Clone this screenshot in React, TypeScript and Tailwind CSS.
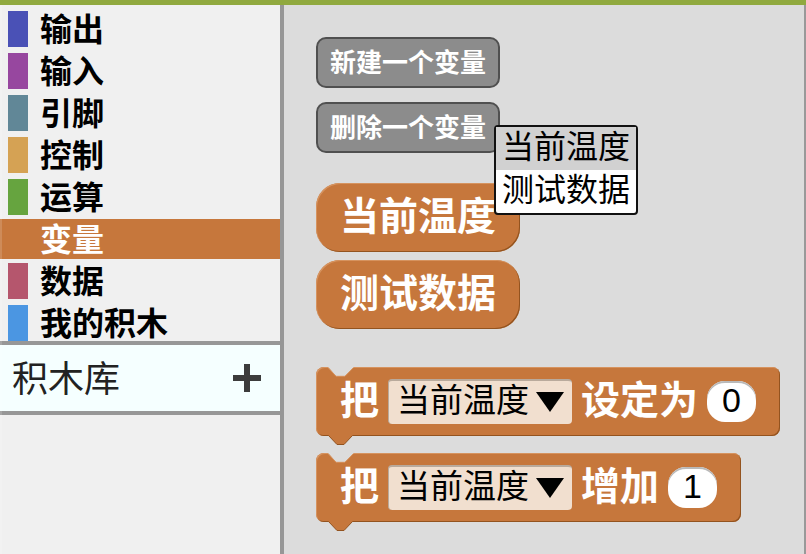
import { useState } from "react";
import type { ReactNode } from "react";

const categories = [
  { name: "输出", color: "bg-[#4a51b6]" },
  { name: "输入", color: "bg-[#97479f]" },
  { name: "引脚", color: "bg-[#618797]" },
  { name: "控制", color: "bg-[#d5a254]" },
  { name: "运算", color: "bg-[#66a43f]" },
  { name: "变量", color: "bg-[#c6773c]" },
  { name: "数据", color: "bg-[#b5566d]" },
  { name: "我的积木", color: "bg-[#4b96e2]" },
];

const variables = ["当前温度", "测试数据"];

const blockEdge =
  "shadow-[inset_1px_1px_0_#d6935f,inset_-1px_-1px_0_#93531f]";

function GreyButton({ children }: { children: ReactNode }) {
  return (
    <button
      type="button"
      className="flex h-[51px] items-center rounded-[10px] border-2 border-[#505050] bg-[#8c8c8c] px-3 pb-1 text-[26px] leading-[38px] font-bold whitespace-nowrap text-white"
    >
      {children}
    </button>
  );
}

function VariableBlock({ name }: { name: string }) {
  return (
    <button
      type="button"
      className={`flex h-[69px] items-center rounded-3xl bg-[#c6773c] px-6 pb-2.5 text-[39px] leading-[50px] font-bold whitespace-nowrap text-white ${blockEdge}`}
    >
      {name}
    </button>
  );
}

function StatementBlock({
  action,
  id,
  initial,
}: {
  action: string;
  id: string;
  initial: string;
}) {
  const [value, setValue] = useState(initial);
  return (
    <div
      className={`relative flex h-[69px] items-center gap-[9px] rounded-[8px] bg-[#c6773c] px-6 text-[39px] leading-[50px] font-bold whitespace-nowrap text-white ${blockEdge}`}
    >
      <svg
        aria-hidden="true"
        className="absolute top-0 left-3"
        width="26"
        height="10"
        viewBox="0 0 26 10"
      >
        <path d="M0 0L8 9H17L26 0Z" fill="#dcdcdc" />
        <path d="M0 .5L8 9.300H17L25.500 .5" fill="none" stroke="#d6935f" />
      </svg>
      <svg
        aria-hidden="true"
        className="absolute top-[67px] left-3"
        width="26"
        height="12"
        viewBox="0 0 26 12"
      >
        <path d="M0 0H26L24.500 1.500L16 10.500H9L.5 1.500Z" fill="#c6773c" />
        <path d="M.5 1.500L9 10.500H16L24.500 1.500" fill="none" stroke="#93531f" />
      </svg>
      <span className="pb-2.5">把</span>
      <span className="relative flex">
        <select
          aria-label={`${action}的变量`}
          className="h-[45px] w-[184px] appearance-none rounded-[4px] border-t-2 border-l border-[#b9aa9c] bg-[#f1dfcf] pr-10 pb-2 pl-2 text-[33px] leading-[35px] font-normal text-black"
        >
          {variables.map((name) => (
            <option key={name}>{name}</option>
          ))}
        </select>
        <svg
          aria-hidden="true"
          className="pointer-events-none absolute top-[13px] right-2"
          width="28"
          height="20"
          viewBox="0 0 28 20"
        >
          <path d="M0 0H28L14 20Z" fill="#000" />
        </svg>
      </span>
      <label htmlFor={id} className="pb-2.5">
        {action}
      </label>
      <input
        id={id}
        value={value}
        onChange={(event) => setValue(event.target.value)}
        className="h-[41px] w-[49px] rounded-[18px] bg-white pb-0.5 text-center font-['Liberation_Sans',Arial,sans-serif] text-[34px] leading-[38px] font-normal text-black shadow-[inset_0_2px_0_#b9b9b9]"
      />
    </div>
  );
}

export default function App() {
  const [selected, setSelected] = useState("变量");
  return (
    <div className="relative flex min-h-screen flex-col overflow-hidden border-t-[5px] border-[#90a93f] bg-[#dcdcdc] font-['Noto_Sans_CJK_SC',sans-serif]">
      <div className="pointer-events-none absolute inset-y-0 left-0 z-10 w-0.5 bg-white/15" />
      <div className="flex grow">
        <aside className="w-[284px] shrink-0 border-r-4 border-[#979797] bg-[#f0f0f0]">
          <nav className="flex flex-col gap-0.5 pt-1">
            {categories.map(({ name, color }) => {
              const active = name === selected;
              return (
                <button
                  key={name}
                  type="button"
                  onClick={() => setSelected(name)}
                  className={`flex h-10 shrink-0 items-center gap-3 px-2 text-left text-[32px] leading-9 font-bold ${
                    active ? `${color} text-white` : "text-black"
                  }`}
                >
                  <span className={`h-9 w-5 ${color}`} />
                  <span className="pb-1">{name}</span>
                </button>
              );
            })}
          </nav>
          <button
            type="button"
            className="-mt-0.5 flex h-[74px] w-full items-center justify-between border-y-4 border-[#979797] bg-[#f5ffff] pr-[19px] pl-3 text-[36px] leading-[46px] text-[#222]"
          >
            <span className="pb-1">积木库</span>
            <svg aria-hidden="true" width="28" height="28" viewBox="0 0 28 28">
              <path d="M11 0H17V11H28V17H17V28H11V17H0V11H11Z" fill="#3c3c3c" />
            </svg>
          </button>
        </aside>
        <main className="flex grow flex-col items-start border-r-2 border-[#999] pt-8 pl-8">
          <GreyButton>新建一个变量</GreyButton>
          <div className="relative mt-[14px]">
            <GreyButton>删除一个变量</GreyButton>
            <div
              role="listbox"
              aria-label="删除一个变量"
              className="absolute top-[23px] left-[178px] z-10 flex w-36 flex-col rounded-[4px] border-2 border-[#111] bg-white"
            >
              {variables.map((name, index) => (
                <button
                  key={name}
                  type="button"
                  role="option"
                  aria-selected={index === 0}
                  className="h-[43px] pb-2 text-center text-[32px] leading-[35px] text-black aria-selected:bg-[#d1d1d1]"
                >
                  {name}
                </button>
              ))}
            </div>
          </div>
          <div className="mt-[30px] flex flex-col gap-2">
            {variables.map((name) => (
              <VariableBlock key={name} name={name} />
            ))}
          </div>
          <div className="mt-[38px] flex flex-col items-start gap-[17px]">
            <StatementBlock id="set-value" action="设定为" initial="0" />
            <StatementBlock id="change-value" action="增加" initial="1" />
          </div>
        </main>
      </div>
    </div>
  );
}
